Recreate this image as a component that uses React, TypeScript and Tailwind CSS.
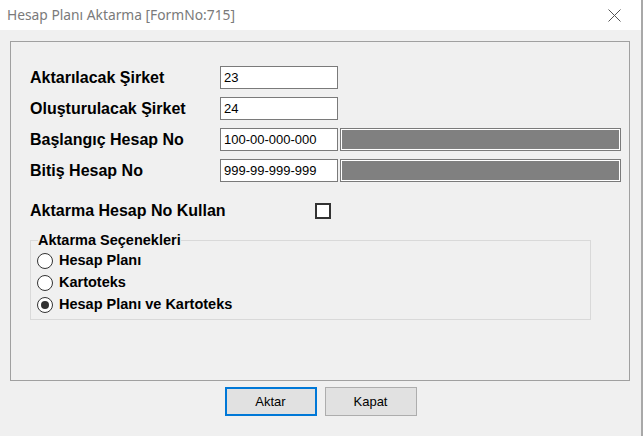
import React from "react";

const rows = [
  { label: "Aktarılacak Şirket", value: "23", bar: false },
  { label: "Oluşturulacak Şirket", value: "24", bar: false },
  { label: "Başlangıç Hesap No", value: "100-00-000-000", bar: true },
  { label: "Bitiş Hesap No", value: "999-99-999-999", bar: true },
];

const options = [
  { label: "Hesap Planı", checked: false },
  { label: "Kartoteks", checked: false },
  { label: "Hesap Planı ve Kartoteks", checked: true },
];

function Radio({ checked }: { checked: boolean }) {
  return (
    <span className="w-[16px] h-[16px] rounded-full border border-[#333] bg-white flex items-center justify-center shrink-0">
      {checked && <span className="w-[8px] h-[8px] rounded-full bg-[#333]" />}
    </span>
  );
}

export default function App() {
  return (
    <div className="w-[643px] h-[436px] bg-[#f0f0f0] border-r-2 border-[#a8a8a8] flex flex-col font-['Liberation_Sans',Arial,sans-serif] text-black">
      {/* title bar */}
      <div className="h-[30px] bg-white flex items-center justify-between pl-[7px] pr-[20px]">
        <span className="font-['Noto_Sans',sans-serif] text-[13.8px] text-[#7a7a7a]">Hesap Planı Aktarma [FormNo:715]</span>
        <svg width="13" height="13" viewBox="0 0 13 13">
          <path d="M0.5 0.5 L12.5 12.5 M12.5 0.5 L0.5 12.5" stroke="#555" strokeWidth="1" />
        </svg>
      </div>

      <div className="pl-[10px] pt-[11px]">
        <div className="w-[620px] h-[340px] border border-[#a0a0a0] pt-[24px] pl-[19px] flex flex-col">
          <div className="flex flex-col gap-[8px]">
            {rows.map((r) => (
              <div key={r.label} className="flex items-center h-[23px]">
                <span className="w-[190px] text-[16px] font-bold">{r.label}</span>
                <div className="w-[118px] h-[23px] border border-[#7a7a7a] bg-white flex items-center px-[3px] text-[13px]">
                  {r.value}
                </div>
                {r.bar && (
                  <div className="ml-[2px] w-[281px] h-[23px] border border-[#7a7a7a] bg-white p-px">
                    <div className="w-full h-full bg-[#808080]" />
                  </div>
                )}
              </div>
            ))}
          </div>

          <div className="flex items-center h-[16px] mt-[21px]">
            <span className="w-[285px] text-[16px] font-bold">Aktarma Hesap No Kullan</span>
            <span className="w-[16px] h-[16px] border-2 border-[#333] bg-white" />
          </div>

          <fieldset className="mt-[13px] w-[561px] border border-[#d9d9d9] px-0 pb-[3px]">
            <legend className="ml-[7px] px-0 text-[14.5px] font-bold leading-[16px]">Aktarma Seçenekleri</legend>
            <div className="flex flex-col pl-[6px] pt-[2px]">
              {options.map((o) => (
                <div key={o.label} className="flex items-center gap-[6px] h-[22px]">
                  <Radio checked={o.checked} />
                  <span className="text-[14.5px] font-bold">{o.label}</span>
                </div>
              ))}
            </div>
          </fieldset>
        </div>
      </div>

      <div className="flex justify-center gap-[8px] mt-[6px]">
        <button className="w-[92px] h-[29px] border-2 border-[#0078d7] bg-[#e1e1e1] text-[13px]">Aktar</button>
        <button className="w-[92px] h-[29px] border border-[#adadad] bg-[#e1e1e1] text-[13px]">Kapat</button>
      </div>
    </div>
  );
}
